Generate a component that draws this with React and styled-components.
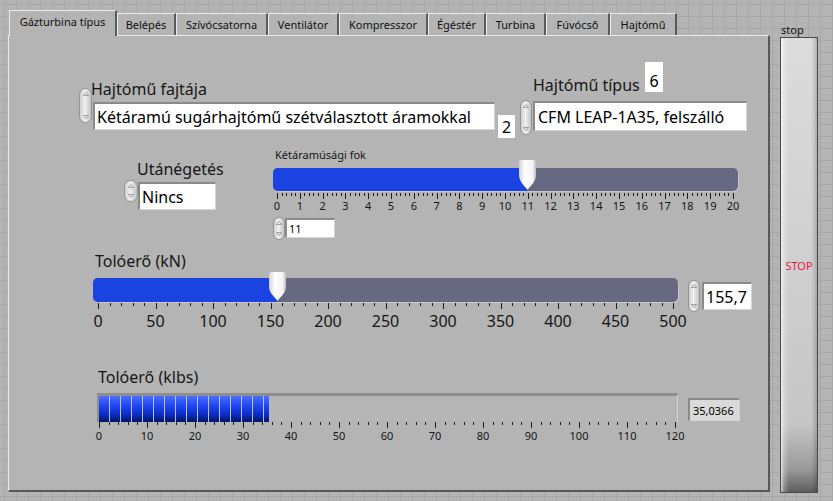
import React from "react";
import styled, { createGlobalStyle } from "styled-components";

const GlobalStyle = createGlobalStyle`
  html, body { margin: 0; padding: 0; }
  body {
    width: 833px;
    height: 501px;
    overflow: hidden;
    background-color: #b4b4b4;
    background-image:
      linear-gradient(to right, #a8a8a8 1px, transparent 1px),
      linear-gradient(to bottom, #a8a8a8 1px, transparent 1px);
    background-size: 12px 12px;
    background-position: 4px 4px;
    font-family: "Noto Sans", "Open Sans", sans-serif;
    color: #111;
  }
`;

const Screen = styled.div`
    display: flex;
    align-items: flex-start;
    padding: 10px 0 0 8px;
`;
const TabControl = styled.div`
    width: 762px;
    display: flex;
    flex-direction: column;
`;
const TabStrip = styled.div`
    display: flex;
    align-items: flex-end;
    height: 25px;
    padding-left: 1px;
`;
const Tab = styled.div`
    box-sizing: border-box;
    position: relative;
    width: ${(p) => p.$w}px;
    height: ${(p) => (p.$active ? 26 : 22)}px;
    margin-bottom: ${(p) => (p.$active ? -1 : 0)}px;
    padding-bottom: ${(p) => (p.$active ? 4 : 0)}px;
    z-index: ${(p) => (p.$active ? 2 : 1)};
    display: flex;
    align-items: center;
    justify-content: center;
    background: #b4b4b4;
    border-top: 1px solid #ececec;
    border-left: 1px solid #ececec;
    border-right: 2px solid #5a5a5a;
    font-size: 11px;
    white-space: nowrap;
`;
const Panel = styled.div`
    box-sizing: border-box;
    height: 457px;
    background: #b4b4b4;
    border-top: 1px solid #ececec;
    border-left: 1px solid #ececec;
    border-right: 2px solid #575757;
    border-bottom: 2px solid #575757;
    display: flex;
    flex-direction: column;
`;
const Section = styled.div`
    flex-shrink: 0;
    display: flex;
    align-items: flex-start;
    height: ${(p) => p.$h}px;
    margin-top: ${(p) => p.$mt || 0}px;
`;
const Group = styled.div`
    flex-shrink: 0;
    display: flex;
    flex-direction: column;
    margin-left: ${(p) => p.$ml || 0}px;
    width: ${(p) => (p.$w ? `${p.$w}px` : "auto")};
`;
const Row = styled.div`
    display: flex;
    align-items: flex-start;
    margin-top: ${(p) => p.$mt || 0}px;
    margin-left: ${(p) => p.$ml || 0}px;
`;
const Label = styled.div`
    box-sizing: border-box;
    font-size: ${(p) => p.$fs || 16}px;
    line-height: ${(p) => p.$lh || 20}px;
    padding-left: ${(p) => p.$pl || 0}px;
    margin-top: ${(p) => p.$mt || 0}px;
    width: ${(p) => (p.$w ? `${p.$w}px` : "auto")};
    white-space: nowrap;
    color: #161616;
`;
const SpinnerBody = styled.div`
    box-sizing: border-box;
    flex-shrink: 0;
    width: ${(p) => p.$w}px;
    height: ${(p) => p.$h}px;
    margin-top: ${(p) => p.$mt || 0}px;
    border-radius: 7px;
    border: 1px solid #949494;
    background: linear-gradient(to right, #cfcfcf, #f1f1f1 45%, #c2c2c2);
    display: flex;
    flex-direction: column;
    justify-content: space-between;
    align-items: center;
    padding: 3px 0;
`;
const TextBox = styled.div`
    box-sizing: border-box;
    flex-shrink: 0;
    width: ${(p) => p.$w}px;
    height: ${(p) => p.$h}px;
    margin-left: ${(p) => p.$ml || 0}px;
    margin-top: ${(p) => p.$mt || 0}px;
    background: ${(p) => (p.$indicator ? "#dadada" : "#ffffff")};
    border-top: 2px solid #8a8a8a;
    border-left: 2px solid #8a8a8a;
    border-right: 1px solid #d4d4d4;
    border-bottom: 1px solid #d4d4d4;
    font-size: ${(p) => p.$fs || 16}px;
    display: flex;
    align-items: center;
    padding-left: ${(p) => p.$pl || 2}px;
    white-space: nowrap;
    overflow: hidden;
    color: #000;
`;
const PlainBox = styled.div`
    box-sizing: border-box;
    flex-shrink: 0;
    width: ${(p) => p.$w}px;
    height: ${(p) => p.$h}px;
    margin-left: ${(p) => p.$ml || 0}px;
    margin-top: ${(p) => p.$mt || 0}px;
    background: #fff;
    font-size: 16px;
    line-height: 20px;
    display: flex;
    align-items: flex-end;
    justify-content: center;
    padding-bottom: 1px;
    color: #000;
`;
const Track = styled.div`
    position: relative;
    width: ${(p) => p.$w}px;
    height: ${(p) => p.$h}px;
    border-radius: 5px;
    background: #676882;
    box-shadow: 1px 1px 0 #c8c8c8;
`;
const TrackFill = styled.div`
    height: 100%;
    border-radius: 5px 0 0 5px;
    background: #1b43e2;
`;
const ThumbSvg = styled.svg`
    position: absolute;
    display: block;
`;
const BarTrack = styled.div`
    box-sizing: border-box;
    width: ${(p) => p.$w}px;
    height: ${(p) => p.$h}px;
    background: #b6b6b6;
    border-top: 3px solid #8e8e8e;
    border-left: 2px solid #8e8e8e;
    border-right: 1px solid #d2d2d2;
`;
const BarFill = styled.div`
    height: 100%;
    background:
      repeating-linear-gradient(to right, transparent 0 10px, rgba(205, 215, 255, 0.85) 10px 11px),
      linear-gradient(to bottom, #4d70ff 0%, #2248f2 35%, #0c2dc4 70%, #021466 100%);
`;
const ScaleBox = styled.div`
    display: flex;
    flex-direction: column;
    width: ${(p) => p.$w}px;
    margin-left: ${(p) => p.$ml || 0}px;
    margin-top: ${(p) => p.$mt || 0}px;
`;
const TickSvg = styled.svg`
    display: block;
    overflow: visible;
`;
const ScaleLabels = styled.div`
    display: flex;
    justify-content: space-between;
    font-size: ${(p) => p.$fs}px;
    line-height: ${(p) => p.$lh}px;
    margin-top: ${(p) => p.$mt || 0}px;
    color: #161616;
`;
const ScaleLabel = styled.span`
    width: 0;
    display: flex;
    justify-content: center;
    white-space: nowrap;
`;
const StopCol = styled.div`
    display: flex;
    flex-direction: column;
    margin-left: 10px;
`;
const StopLabel = styled.div`
    font-size: 11px;
    line-height: 15px;
    margin-top: 12px;
    padding-left: 1px;
`;
const StopButton = styled.div`
    box-sizing: border-box;
    width: 38px;
    height: 456px;
    border: 1px solid #4a4a4a;
    background:
      linear-gradient(to right, rgba(255,255,255,0.7) 0, rgba(255,255,255,0.25) 3px, transparent 8px, transparent 30px, rgba(0,0,0,0.08) 33px, rgba(0,0,0,0.2) 100%),
      linear-gradient(to bottom, #dcdcdc 0%, #d2d2d2 40%, #c6c6c6 85%, #9a9a9a 95%, #5e5e5e 100%);
    display: flex;
    align-items: center;
    justify-content: center;
    color: #e4203c;
    font-size: 11px;
`;

const tabs = [
    ["Gázturbina típus", 108],
    ["Belépés", 59],
    ["Szívócsatorna", 92],
    ["Ventilátor", 71],
    ["Kompresszor", 89],
    ["Égéstér", 58],
    ["Turbina", 60],
    ["Fúvócső", 64],
    ["Hajtómű", 67],
];

const Spinner = ({ w = 12, h, mt }) => (
    <SpinnerBody $w={w} $h={h} $mt={mt}>
        <svg width="6" height="4" viewBox="0 0 6 4">
            <path d="M0.5 3.5 L3 0.5 L5.5 3.5 Z" fill="#f6f6f6" stroke="#8a8a8a" strokeWidth="0.8" />
        </svg>
        <svg width="6" height="4" viewBox="0 0 6 4">
            <path d="M0.5 0.5 L3 3.5 L5.5 0.5 Z" fill="#f6f6f6" stroke="#8a8a8a" strokeWidth="0.8" />
        </svg>
    </SpinnerBody>
);

const Scale = ({ width, labels, minorPer, fs, lh, ml, mt, labelMt, tickH = 6 }) => {
    const n = (labels.length - 1) * minorPer;
    const lines = [];
    for (let i = 0; i <= n; i++) {
        const x = Math.round((i * width) / n) + 0.5;
        const major = i % minorPer === 0;
        lines.push(
            <line key={i} x1={x} x2={x} y1={0} y2={major ? tickH : 3} stroke="#1c1c1c" strokeWidth="1" />
        );
    }
    return (
        <ScaleBox $w={width} $ml={ml} $mt={mt}>
            <TickSvg width={width + 1} height={tickH}>{lines}</TickSvg>
            <ScaleLabels $fs={fs} $lh={lh} $mt={labelMt}>
                {labels.map((l) => (
                    <ScaleLabel key={l}>{l}</ScaleLabel>
                ))}
            </ScaleLabels>
        </ScaleBox>
    );
};

const Thumb = ({ left, top, h }) => (
    <ThumbSvg width="17" height={h} viewBox={`0 0 17 ${h}`} style={{ left, top }}>
        <defs>
            <linearGradient id={`tg${h}`} x1="0" x2="1" y1="0" y2="0">
                <stop offset="0" stopColor="#d4d4d4" />
                <stop offset="0.35" stopColor="#ffffff" />
                <stop offset="0.8" stopColor="#f4f4f4" />
                <stop offset="1" stopColor="#bdbdbd" />
            </linearGradient>
        </defs>
        <path
            d={`M2 0 H15 Q17 0 17 2 V${h * 0.5} C17 ${h * 0.75} 10 ${h - 3} 8.5 ${h} C7 ${h - 3} 0 ${h * 0.75} 0 ${h * 0.5} V2 Q0 0 2 0 Z`}
            fill={`url(#tg${h})`}
        />
    </ThumbSvg>
);

const Slider = ({ trackW, trackH, scaleOff, scaleW, min, max, value, thumbTop, thumbH }) => {
    const cx = scaleOff + ((value - min) / (max - min)) * scaleW;
    return (
        <Track $w={trackW} $h={trackH}>
            <TrackFill style={{ width: cx }} />
            <Thumb left={cx - 8.5} top={thumbTop} h={thumbH} />
        </Track>
    );
};

const range = (a, b, s) => {
    const out = [];
    for (let v = a; v <= b; v += s) out.push(String(v));
    return out;
};

const App = () => {
    const klbs = 35.0366;
    return (
        <>
            <GlobalStyle />
            <Screen>
                <TabControl>
                    <TabStrip>
                        {tabs.map(([name, w], i) => (
                            <Tab key={name} $w={w} $active={i === 0}>
                                {name}
                            </Tab>
                        ))}
                    </TabStrip>
                    <Panel>
                        <Section $mt={26} $h={80}>
                            <Group $ml={70} $w={436}>
                                <Label $pl={12} $mt={17}>Hajtómű fajtája</Label>
                                <Row $mt={3}>
                                    <Spinner w={13} h={35} mt={-14} />
                                    <TextBox $w={402} $h={28} $ml={1}>
                                        Kétáramú sugárhajtómű szétválasztott áramokkal
                                    </TextBox>
                                    <PlainBox $w={17} $h={23} $ml={3} $mt={13}>2</PlainBox>
                                </Row>
                            </Group>
                            <Group $ml={5} $w={227}>
                                <Row>
                                    <Label $pl={13} $mt={13} $w={125}>Hajtómű típus</Label>
                                    <PlainBox $w={18} $h={30}>6</PlainBox>
                                </Row>
                                <Row $mt={6}>
                                    <Spinner h={35} mt={-1} />
                                    <TextBox $w={214} $h={30} $ml={1} $pl={3}>
                                        CFM LEAP-1A35, felszálló
                                    </TextBox>
                                </Row>
                            </Group>
                        </Section>

                        <Section $h={108}>
                            <Group $ml={115} $w={92}>
                                <Label $pl={13} $mt={17}>Utánégetés</Label>
                                <Row $mt={3}>
                                    <Spinner w={14} h={22} mt={-2} />
                                    <TextBox $w={78} $h={28} $pl={2}>Nincs</TextBox>
                                </Row>
                            </Group>
                            <Group $ml={57} $w={465}>
                                <Label $fs={11} $lh={14} $pl={2} $mt={6}>Kétáramúsági fok</Label>
                                <Row $mt={6}>
                                    <Slider trackW={465} trackH={23} scaleOff={4} scaleW={456} min={0} max={20} value={11} thumbTop={-8} thumbH={30} />
                                </Row>
                                <Scale width={456} labels={range(0, 20, 1)} minorPer={5} fs={11} lh={13} ml={4} mt={2} />
                                <Row $mt={5}>
                                    <Spinner h={23} />
                                    <TextBox $w={50} $h={20} $mt={1} $fs={11}>11</TextBox>
                                </Row>
                            </Group>
                        </Section>

                        <Section $h={117}>
                            <Group $ml={84}>
                                <Label $pl={2} $mt={1}>Tolóerő (kN)</Label>
                                <Row $mt={7}>
                                    <Group $w={585}>
                                        <Slider trackW={585} trackH={24} scaleOff={5} scaleW={575} min={0} max={500} value={155.7} thumbTop={-6} thumbH={29} />
                                        <Scale width={575} labels={range(0, 500, 50)} minorPer={5} fs={16} lh={20} ml={5} mt={1} labelMt={2} />
                                    </Group>
                                    <Row $ml={10} $mt={2}>
                                        <Spinner h={32} />
                                        <TextBox $w={50} $h={28} $ml={2} $mt={2}>155,7</TextBox>
                                    </Row>
                                </Row>
                            </Group>
                        </Section>

                        <Section $h={80}>
                            <Group $ml={88}>
                                <Label $pl={1}>Tolóerő (klbs)</Label>
                                <Row $mt={6}>
                                    <Group $w={581}>
                                        <BarTrack $w={581} $h={29}>
                                            <BarFill style={{ width: 2 + (klbs / 120) * 576 }} />
                                        </BarTrack>
                                        <Scale width={576} labels={range(0, 120, 10)} minorPer={5} fs={11} lh={13} ml={2} labelMt={1} />
                                    </Group>
                                    <TextBox $indicator $w={52} $h={23} $ml={10} $mt={5} $fs={11} $pl={3}>
                                        35,0366
                                    </TextBox>
                                </Row>
                            </Group>
                        </Section>
                    </Panel>
                </TabControl>
                <StopCol>
                    <StopLabel>stop</StopLabel>
                    <StopButton>STOP</StopButton>
                </StopCol>
            </Screen>
        </>
    );
};

export default App;
